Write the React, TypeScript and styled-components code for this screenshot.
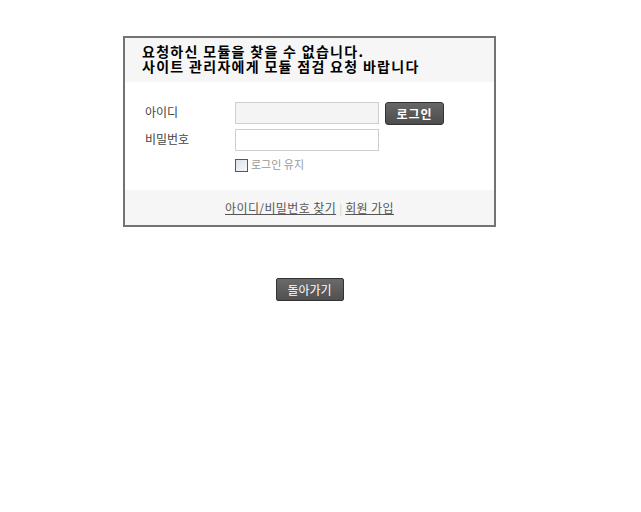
import React from "react";
import styled, { createGlobalStyle } from "styled-components";

const GlobalStyle = createGlobalStyle`
  html, body {
    margin: 0;
    padding: 0;
    background: #fff;
    font-family: "Noto Sans CJK KR", "Noto Sans", sans-serif;
    font-size: 12px;
    color: #333;
  }
`;

const App: React.FC = () => {
  return (
    <>
      <GlobalStyle />
      <Page>
        <LoginBox>
          <Header>
            <HeaderLine>요청하신 모듈을 찾을 수 없습니다.</HeaderLine>
            <HeaderLine>사이트 관리자에게 모듈 점검 요청 바랍니다</HeaderLine>
          </Header>
          <Form>
            <FieldRow>
              <Label>아이디</Label>
              <Input filled />
              <LoginButton>로그인</LoginButton>
            </FieldRow>
            <FieldRow>
              <Label>비밀번호</Label>
              <Input />
            </FieldRow>
            <KeepRow>
              <Checkbox />
              <KeepLabel>로그인 유지</KeepLabel>
            </KeepRow>
          </Form>
          <Footer>
            <FooterLink>아이디/비밀번호 찾기</FooterLink>
            <Separator>|</Separator>
            <FooterLink>회원 가입</FooterLink>
          </Footer>
        </LoginBox>
        <BackButton>돌아가기</BackButton>
      </Page>
    </>
  );
};

const Page = styled.div`
  width: 619px;
  padding-top: 36px;
  display: flex;
  flex-direction: column;
  align-items: center;
`;

const LoginBox = styled.div`
  width: 369px;
  border: 2px solid #737373;
  background: #fff;
`;

const Header = styled.div`
  background: #f6f6f6;
  padding: 6px 0 8px 17px;
  display: flex;
  flex-direction: column;
`;

const HeaderLine = styled.div`
  font-size: 14px;
  font-weight: 700;
  line-height: 15px;
  letter-spacing: 1.3px;
  color: #000;
  white-space: nowrap;
`;

const Form = styled.div`
  padding: 20px 0 18px 20px;
  display: flex;
  flex-direction: column;
  gap: 5px;
`;

const FieldRow = styled.div`
  display: flex;
  align-items: center;
  height: 22px;
`;

const Label = styled.span`
  width: 90px;
  color: #444;
  font-size: 12px;
  margin-top: -4px;
`;

const Input = styled.div<{ filled?: boolean }>`
  width: 142px;
  height: 20px;
  border: 1px solid #cfcfcf;
  background: ${(p) => (p.filled ? "#f4f4f4" : "#fff")};
`;

const LoginButton = styled.button`
  margin-left: 6px;
  width: 59px;
  height: 23px;
  border: 1px solid #333;
  border-radius: 3px;
  background: linear-gradient(#666, #4d4d4d);
  color: #fff;
  font-family: "Noto Sans CJK KR", sans-serif;
  font-size: 12px;
  font-weight: 700;
  letter-spacing: 1px;
  padding: 0;
`;

const KeepRow = styled.div`
  display: flex;
  align-items: center;
  padding-left: 90px;
`;

const Checkbox = styled.span`
  width: 11px;
  height: 11px;
  border: 1px solid #4a5a6a;
  background: linear-gradient(135deg, #dde3ea, #f6f7f9);
  margin-top: 3px;
`;

const KeepLabel = styled.span`
  margin-left: 3px;
  color: #999;
  font-size: 11px;
`;

const Footer = styled.div`
  background: #f6f6f6;
  height: 35px;
  display: flex;
  align-items: center;
  justify-content: center;
  box-sizing: border-box;
`;

const FooterLink = styled.span`
  color: #555;
  text-decoration: underline;
  font-size: 12px;
  letter-spacing: 0.4px;
`;

const Separator = styled.span`
  color: #ccc;
  margin: 0 3px;
  font-size: 11px;
`;

const BackButton = styled.button`
  margin-top: 51px;
  width: 68px;
  height: 23px;
  border: 1px solid #333;
  border-radius: 2px;
  background: linear-gradient(#6a6a6a, #505050);
  color: #fff;
  font-family: "Noto Sans CJK KR", sans-serif;
  font-size: 12px;
  padding: 0;
`;

export default App;
